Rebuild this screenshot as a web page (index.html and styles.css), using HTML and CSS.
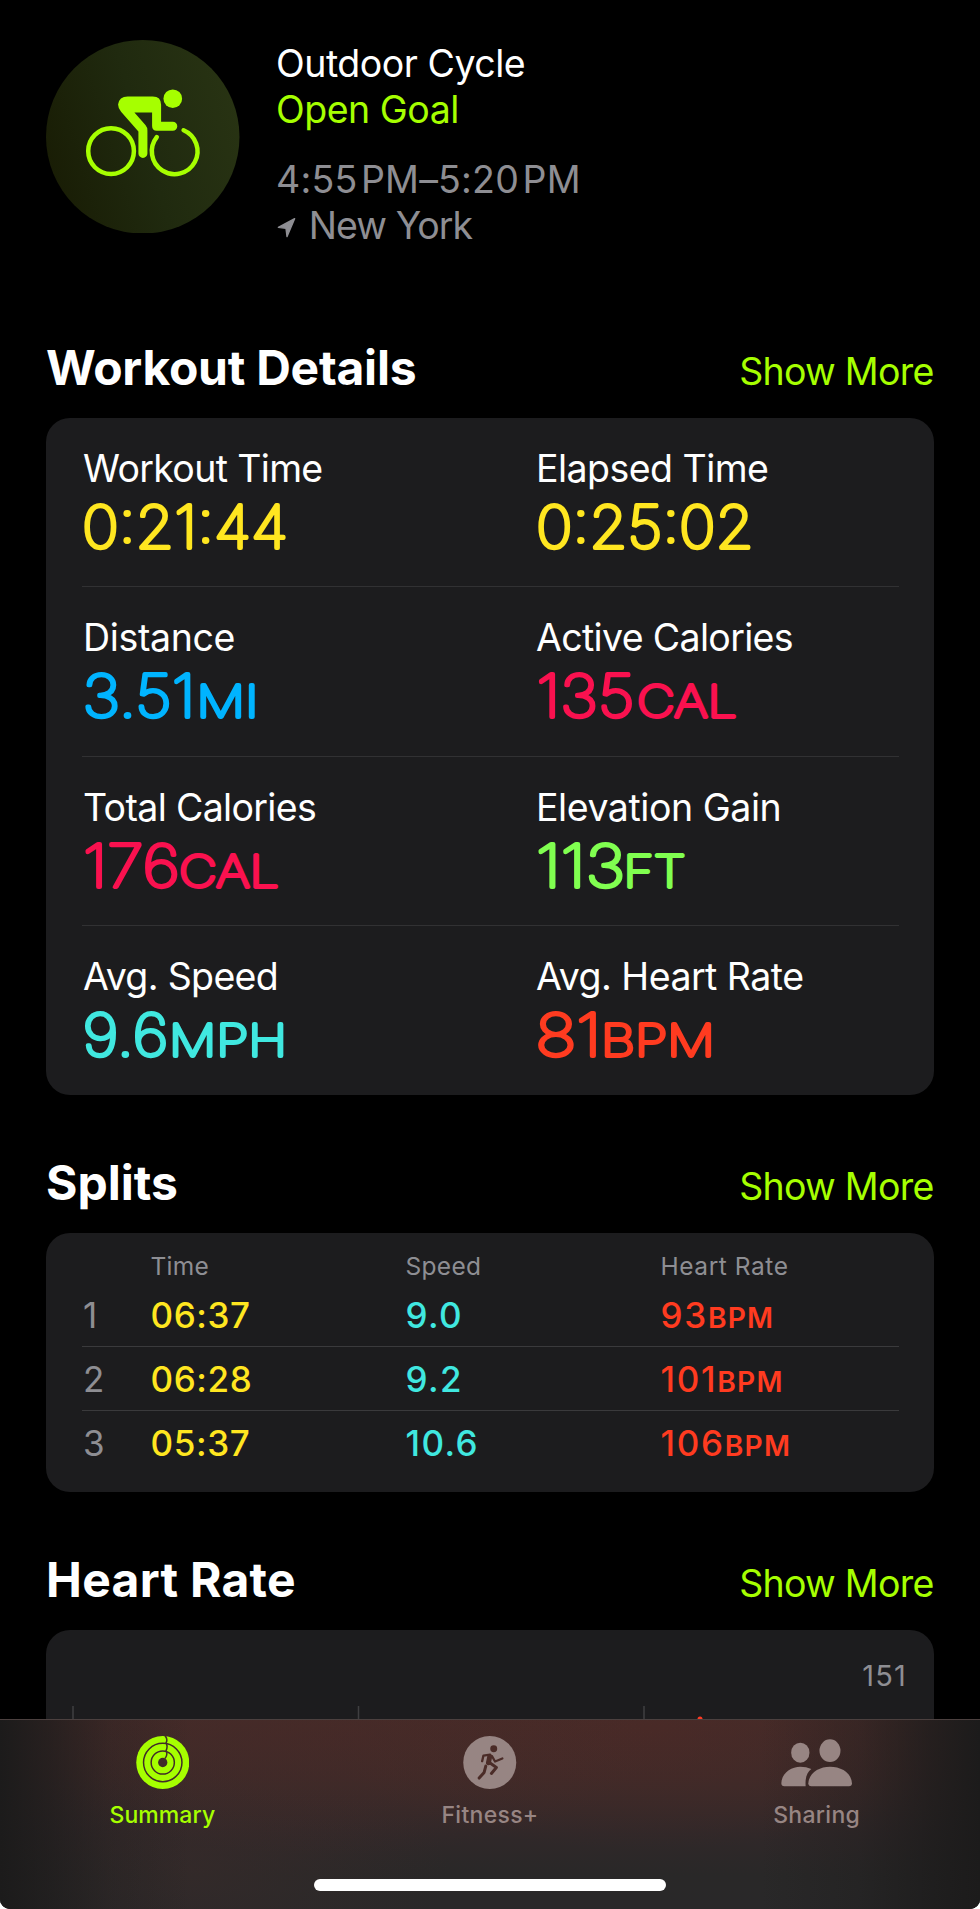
FILE: index.html
```html
<!DOCTYPE html>
<html lang="en">
<head>
<meta charset="utf-8">
<title>Outdoor Cycle</title>
<link rel="stylesheet" href="styles.css">
</head>
<body>
<div class="screen">
  <main class="content">
    <header class="workout">
      <svg class="workout-icon" viewBox="48 58 580 580">
        <defs>
          <linearGradient id="badge" x1="0" y1="0.65" x2="1" y2="0.35">
            <stop offset="0" stop-color="#191d05"/><stop offset="0.5" stop-color="#202a0f"/><stop offset="1" stop-color="#283313"/>
          </linearGradient>
        </defs>
        <circle cx="338" cy="348" r="290" fill="url(#badge)"/>
        <g fill="none" stroke="#a6ff00" stroke-width="13.5" stroke-linecap="round">
          <circle cx="243" cy="391" r="68.5"/>
          <path d="M460.500 328.500A68.500 68.500 0 1 1 380 349"/>
        </g>
        <g fill="#a6ff00">
          <circle cx="428" cy="234" r="28"/>
          <path d="M293 227H368Q393 227 393 252V303H428A13.500 13.500 0 0 1 428 330H380Q366 330 366 316V275H313L346 313Q352 320 352 329V398A13.500 13.500 0 0 1 325 398V332L273 273Q264 262 264 251Q267 227 293 227Z"/>
        </g>
      </svg>
      <div class="workout-text">
        <div class="name">Outdoor Cycle</div>
        <div class="goal">Open Goal</div>
        <div class="when">4:55<span class="meridiem">PM</span>–5:20<span class="meridiem">PM</span></div>
        <div class="where">
          <svg class="arrow" viewBox="52 558 58 64"><path d="M56 589L105 563L82 617L79 592Z" fill="#8e8e93" stroke="#8e8e93" stroke-width="4" stroke-linejoin="round"/></svg>
          <span>New York</span>
        </div>
      </div>
    </header>

    <section>
      <div class="heading"><h2 class="snug-title">Workout Details</h2><a class="more">Show More</a></div>
      <div class="card metrics">
        <div class="metric-row">
          <div class="metric"><div class="label snug">Workout Time</div>
            <svg class="value yellow"><text class="num" x="-1" y="56.200" textLength="206" lengthAdjust="spacingAndGlyphs">0:21:44</text></svg></div>
          <div class="metric"><div class="label">Elapsed Time</div>
            <svg class="value yellow"><text class="num" x="0" y="56.200" textLength="218" lengthAdjust="spacingAndGlyphs">0:25:02</text></svg></div>
        </div>
        <div class="metric-row">
          <div class="metric"><div class="label open">Distance</div>
            <svg class="value blue"><text class="num" x="-0.500" y="56.200" textLength="113" lengthAdjust="spacingAndGlyphs">3.51</text><text class="unit" x="113.500" y="56.200" textLength="62" lengthAdjust="spacingAndGlyphs">MI</text></svg></div>
          <div class="metric"><div class="label snug">Active Calories</div>
            <svg class="value pink"><text class="num" x="0.500" y="56.200" textLength="98" lengthAdjust="spacingAndGlyphs">135</text><text class="unit" x="101" y="56.200" textLength="100" lengthAdjust="spacingAndGlyphs">CAL</text></svg></div>
        </div>
        <div class="metric-row">
          <div class="metric"><div class="label snug">Total Calories</div>
            <svg class="value pink"><text class="num" x="0" y="56.200" textLength="97" lengthAdjust="spacingAndGlyphs">176</text><text class="unit" x="96" y="56.200" textLength="100" lengthAdjust="spacingAndGlyphs">CAL</text></svg></div>
          <div class="metric"><div class="label open2">Elevation Gain</div>
            <svg class="value green"><text class="num" x="0" y="56.200" textLength="89" lengthAdjust="spacingAndGlyphs">113</text><text class="unit" x="87.500" y="56.200" textLength="62" lengthAdjust="spacingAndGlyphs">FT</text></svg></div>
        </div>
        <div class="metric-row">
          <div class="metric"><div class="label snug">Avg. Speed</div>
            <svg class="value cyan"><text class="num" x="-0.500" y="56.200" textLength="86" lengthAdjust="spacingAndGlyphs">9.6</text><text class="unit" x="86" y="56.200" textLength="118" lengthAdjust="spacingAndGlyphs">MPH</text></svg></div>
          <div class="metric"><div class="label">Avg. Heart Rate</div>
            <svg class="value red"><text class="num" x="-0.500" y="56.200" textLength="66" lengthAdjust="spacingAndGlyphs">81</text><text class="unit" x="65" y="56.200" textLength="114" lengthAdjust="spacingAndGlyphs">BPM</text></svg></div>
        </div>
      </div>
    </section>

    <section>
      <div class="heading"><h2>Splits</h2><a class="more">Show More</a></div>
      <div class="card splits">
        <div class="split-row split-head"><span></span><span>Time</span><span>Speed</span><span class="wide">Heart Rate</span></div>
        <div class="split-row"><span class="index">1</span><span class="yellow time">06:37</span><span class="cyan">9.0</span><span class="red">93<small>BPM</small></span></div>
        <div class="split-row"><span class="index">2</span><span class="yellow time">06:28</span><span class="cyan">9.2</span><span class="red">101<small>BPM</small></span></div>
        <div class="split-row"><span class="index">3</span><span class="yellow time">05:37</span><span class="cyan">10.6</span><span class="red">106<small>BPM</small></span></div>
      </div>
    </section>

    <section>
      <div class="heading"><h2 class="open-title">Heart Rate</h2><a class="more">Show More</a></div>
      <div class="card chart">
        <div class="chart-max">151</div>
        <svg class="plot" viewBox="0 0 888 204">
          <path d="M27 0V204M312.500 0V204M598 0V204" stroke="#3f3f41" stroke-width="1.500"/>
          <circle cx="654" cy="13" r="2.500" fill="#ff3b24"/>
        </svg>
      </div>
    </section>
  </main>

  <nav class="tabbar">
    <div class="tabs">
      <div class="tab active">
        <svg class="disc" viewBox="407 587 160 160">
          <circle cx="487" cy="667" r="80" fill="#a6ff00"/>
          <g fill="none" stroke="#402b29" stroke-width="4.500">
            <circle cx="487" cy="667" r="58"/><circle cx="487" cy="667" r="35"/>
            <path d="M494 586Q503 597 497 608Q503 620 497 631Q503 643 494 655"/>
          </g>
          <circle cx="487" cy="667" r="14" fill="#402b29"/>
        </svg>
        <span>Summary</span>
      </div>
      <div class="tab">
        <svg class="disc" viewBox="23 17 160 160">
          <circle cx="103" cy="97" r="80" fill="#978583"/>
          <circle cx="115" cy="55.500" r="10.500" fill="#4b2c28"/>
          <g fill="none" stroke="#4b2c28" stroke-linecap="round" stroke-linejoin="round">
            <path stroke-width="7" d="M80 93L84 76L104 73M110 78L119 94L141 85"/>
            <path stroke-width="15" d="M103 79L99 98"/>
            <path stroke-width="9" d="M103 98L123 112L108 130M91 108L86 127L71 144"/>
          </g>
        </svg>
        <span>Fitness+</span>
      </div>
      <div class="tab">
        <svg class="people" viewBox="122 70 214 144">
          <g fill="#978583">
            <ellipse cx="180" cy="111" rx="27.500" ry="30"/><ellipse cx="269" cy="105" rx="31.500" ry="34"/>
            <path d="M213 212Q204 212 204 203C206 170 238 153 269 153C302 153 333 170 335 203Q335 212 326 212Z"/>
            <path d="M132 212Q123 212 123 203C124 172 152 153 180 153Q198 153 213 160C200 170 194 185 196 212Z"/>
          </g>
        </svg>
        <span>Sharing</span>
      </div>
    </div>
    <div class="home-indicator"></div>
  </nav>
</div>
</body>
</html>
```
FILE: styles.css
```css
* { box-sizing: border-box; }

body {
  margin: 0;
  background: #fff;
  color: #fff;
  font-family: Inter, "Liberation Sans", sans-serif;
}

.screen {
  position: relative;
  width: 980px;
  height: 1909px;
  overflow: hidden;
  background: #000;
  border-radius: 0 0 10px 10px;
}

.content { padding: 39.5px 46px 0; }

/* Workout summary */
.workout { display: flex; height: 299px; }
.workout-icon { width: 193.5px; height: 193.5px; flex: none; }
.workout-text {
  padding: 1.5px 0 0 36.5px;
  font-size: 37.5px;
  line-height: 46.3px;
  letter-spacing: -0.48px;
}
.goal { color: #a6ff00; }
.when { margin-top: 23px; color: #8e8e93; letter-spacing: 0.2px; white-space: nowrap; }
.meridiem { margin-left: 3.5px; }
.where { display: flex; align-items: center; color: #8e8e93; letter-spacing: -0.95px; }
.arrow { width: 19.3px; height: 21.3px; margin: 3px 12.5px 0 1px; }

/* Sections */
section { margin-bottom: 58.5px; }
.heading {
  display: flex;
  justify-content: space-between;
  align-items: baseline;
  height: 58px;
  margin-bottom: 21.5px;
  line-height: 58px;
}
h2 { margin: 0; font-size: 48px; font-weight: 700; }
.snug-title { letter-spacing: -0.25px; }
.open-title { letter-spacing: 0.28px; }
.more { padding-right: 0.5px; color: #a6ff00; font-size: 37.5px; letter-spacing: -0.75px; }
.card { background: #1c1c1e; border-radius: 24px; }

.yellow { color: #ffe620; }
.blue { color: #00b4ff; }
.pink { color: #fa114f; }
.green { color: #80ff50; }
.cyan { color: #40e8e0; }
.red { color: #ff3b20; }

/* Workout metrics */
.metrics { height: 677px; padding: 0 35.5px 0 36px; }
.metric-row {
  display: grid;
  grid-template-columns: 453px 1fr;
  height: 169.25px;
  padding-top: 28px;
  border-bottom: 1px solid #313133;
}
.metric-row:last-child { border-bottom: 0; }
.metric { padding-left: 1px; }
.label { font-size: 37.5px; line-height: 46px; letter-spacing: -0.53px; }
.label.snug { letter-spacing: -0.66px; }
.label.open { letter-spacing: -0.35px; }
.label.open2 { letter-spacing: -0.45px; }
.value {
  display: block;
  width: 300px;
  height: 68px;
  fill: currentColor;
  stroke: currentColor;
  stroke-linejoin: round;
  overflow: visible;
}
.num { font-size: 58.2px; font-weight: 140; stroke-width: 3.9px; }
.unit { font-size: 44px; font-weight: 110; stroke-width: 3.8px; }

/* Splits */
.splits { height: 259px; padding: 18px 35.5px 0 36px; }
.split-row {
  display: grid;
  grid-template-columns: 67.5px 255px 255px 1fr;
  height: 63.8px;
  padding: 8.7px 0 0 1px;
  border-bottom: 1px solid #3a3a3c;
  font-size: 35px;
  font-weight: 500;
  line-height: 46px;
  letter-spacing: 1.4px;
}
.split-row:last-child { border-bottom: 0; }
.split-head {
  height: 32.3px;
  padding-top: 0;
  border: 0;
  color: #8e8e93;
  font-size: 24.5px;
  font-weight: 400;
  line-height: 30px;
  letter-spacing: 0.3px;
}
.wide { letter-spacing: 0.55px; }
.time { letter-spacing: 0.6px; }
.split-row > .red { letter-spacing: 1.7px; }
.index { color: #8e8e93; font-weight: 400; }
small { font-size: 28.2px; font-weight: 600; letter-spacing: 1.2px; }

/* Heart rate chart */
.chart { height: 280px; padding-top: 28px; }
.chart-max {
  padding-right: 27px;
  color: #8e8e93;
  font-size: 29px;
  line-height: 36px;
  letter-spacing: 1.2px;
  text-align: right;
}
.plot { display: block; width: 888px; height: 204px; margin-top: 11.5px; }

/* Tab bar floats over the scrolling content */
.tabbar {
  position: absolute;
  left: 0;
  bottom: 0;
  width: 980px;
  height: 190px;
  border-top: 1px solid #4b403f;
  background:
    linear-gradient(90deg, #1c1b1b 0, #1c1b1bb0 50px, #1c1b1b40 110px, #1c1b1b00 190px, #1c1b1b00 760px, #1c1b1b50 860px, #1c1b1bc0 930px, #1c1b1b 980px),
    radial-gradient(ellipse 330px 120px at 330px 15px, #4b292670, #4b292600),
    radial-gradient(ellipse 330px 120px at 650px 10px, #50292580, #50292500),
    radial-gradient(ellipse 260px 120px at 190px 150px, #3a2b2a90, #3a2b2a00),
    linear-gradient(180deg, #422b29 0, #3c2a29 60px, #302829 115px, #292828 155px, #292829 190px);
}
.tabs { display: grid; grid-template-columns: repeat(3, 1fr); margin-top: 16px; }
.tab {
  display: flex;
  flex-direction: column;
  align-items: center;
  color: #978583;
  font-size: 23px;
  font-weight: 500;
  line-height: 28px;
  letter-spacing: 0.3px;
}
.active { color: #a6ff00; letter-spacing: 0.1px; margin-left: -2px; }
.disc { width: 53.5px; height: 53px; margin-bottom: 11.5px; }
.people { width: 71.3px; height: 48px; margin: 2.5px 0 14px; }
.home-indicator { width: 352px; height: 12px; margin: 50.5px auto 0; border-radius: 6px; background: #fff; }
```
